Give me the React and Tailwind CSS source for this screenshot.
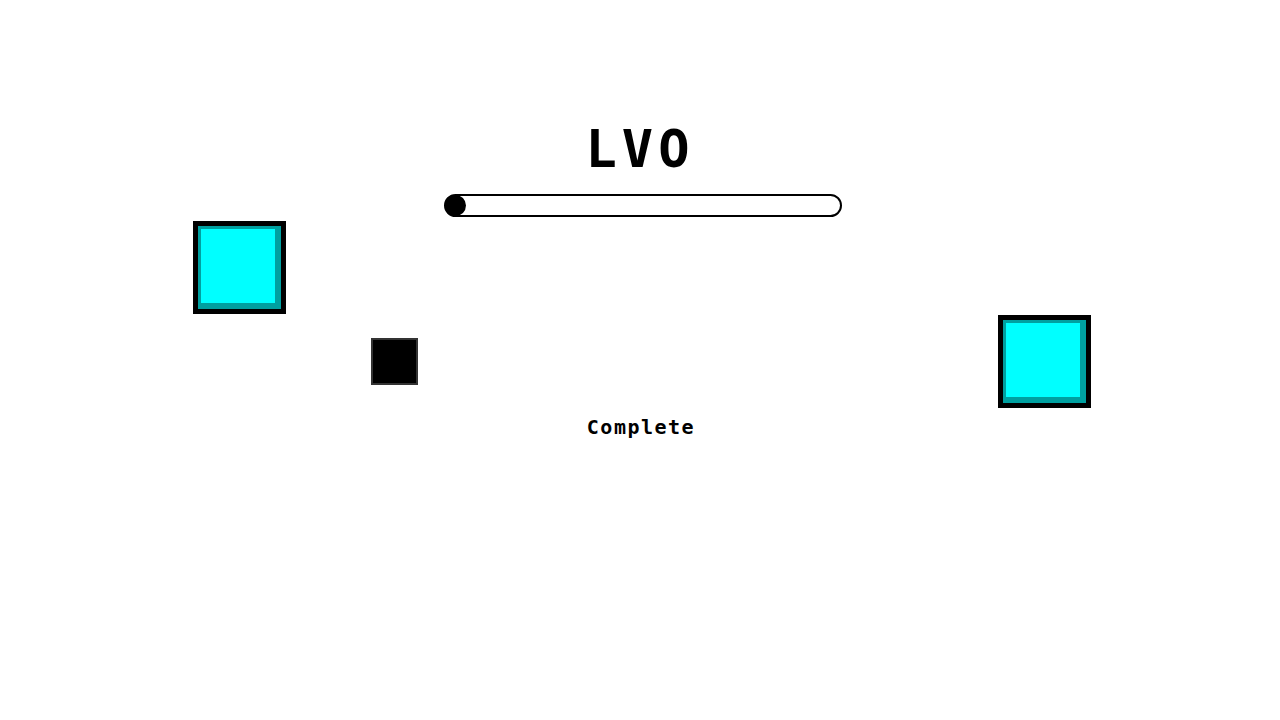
export default function App() {
  return (
    <div className="relative w-[1280px] h-[720px] bg-white overflow-hidden" style={{ fontFamily: '"DejaVu Sans Mono", "Liberation Mono", monospace' }}>
      <div className="flex flex-col items-center pt-[123px]">
        <div className="text-[52px] leading-[52px] font-bold tracking-[5px] text-black pl-[1px] pr-[1px]">LVO</div>
        <div className="mt-[19px] ml-[5px] w-[398px] h-[23px] rounded-full border-2 border-black bg-white relative">
          <div className="absolute left-[-1px] top-[-1px] w-[21px] h-[21px] rounded-full bg-black"></div>
        </div>
        <div className="mt-[198px] text-[20px] leading-[24px] font-bold tracking-[1.5px] text-black pl-[2px]">Complete</div>
      </div>

      <div className="absolute left-[193px] top-[221px] w-[93px] h-[93px] border-[5px] border-black bg-[#00ffff] shadow-[inset_3px_3px_0_#00a0a0,inset_-6px_-6px_0_#00a0a0]"></div>
      <div className="absolute left-[998px] top-[315px] w-[93px] h-[93px] border-[5px] border-black bg-[#00ffff] shadow-[inset_3px_3px_0_#00a0a0,inset_-6px_-6px_0_#00a0a0]"></div>
      <div className="absolute left-[371px] top-[338px] w-[47px] h-[47px] border-2 border-[#333333] bg-black"></div>
    </div>
  );
}
